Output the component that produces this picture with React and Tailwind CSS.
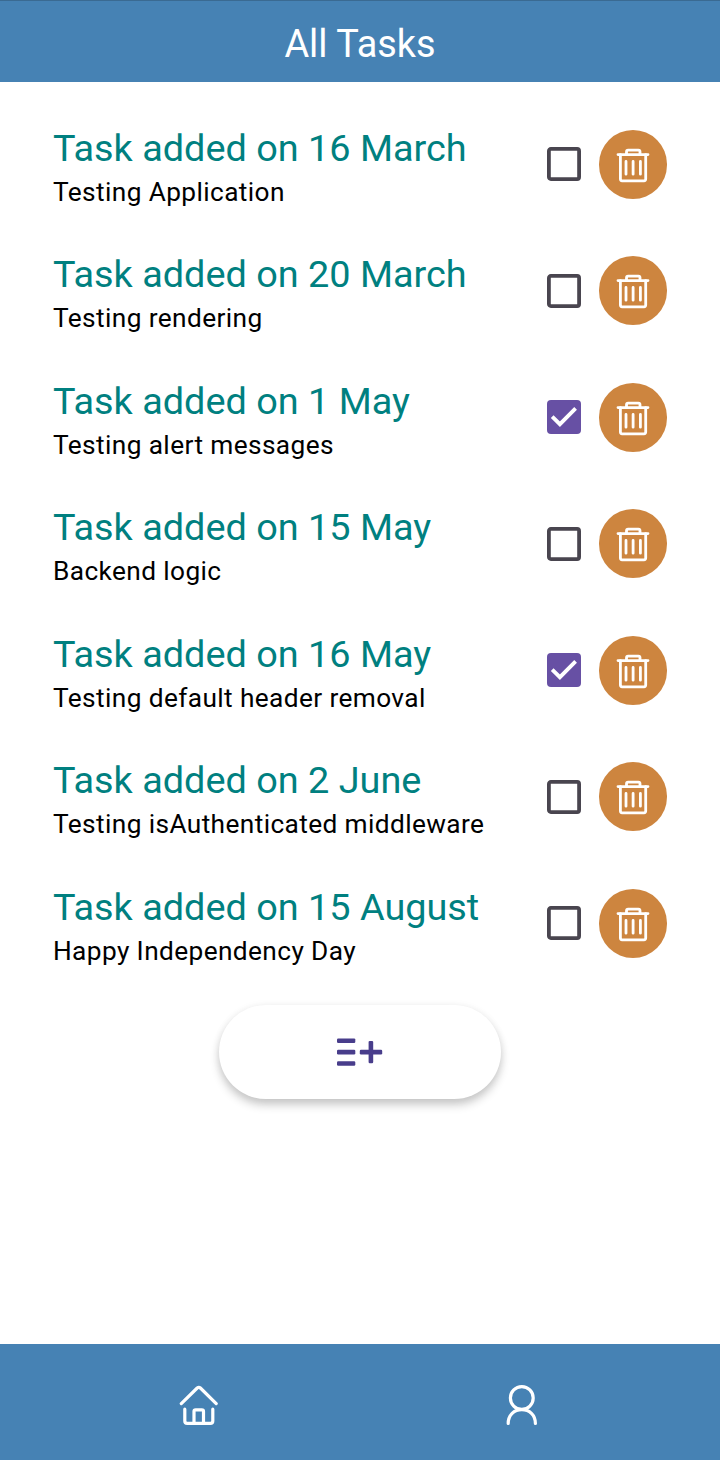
const tasks = [
  { title: "Task added on 16 March", note: "Testing Application", done: false },
  { title: "Task added on 20 March", note: "Testing rendering", done: false },
  { title: "Task added on 1 May", note: "Testing alert messages", done: true },
  { title: "Task added on 15 May", note: "Backend logic", done: false },
  { title: "Task added on 16 May", note: "Testing default header removal", done: true },
  { title: "Task added on 2 June", note: "Testing isAuthenticated middleware", done: false },
  { title: "Task added on 15 August", note: "Happy Independency Day", done: false },
];

function Checkbox({ checked }) {
  return (
    <button role="checkbox" aria-checked={checked} className="mr-[18px] shrink-0">
      <svg width="34" height="34" viewBox="0 0 34 34" fill="none" className="block">
        {checked ? (
          <>
            <rect width="34" height="34" rx="4" fill="#6750a4" />
            <path d="M5.2 16.6L12.9 24.2L28.6 8.4" stroke="white" strokeWidth="3.8" />
          </>
        ) : (
          <rect x="1.9" y="1.9" width="30.2" height="30.2" rx="2" stroke="#49454f" strokeWidth="3.8" />
        )}
      </svg>
    </button>
  );
}

function DeleteButton() {
  return (
    <button className="h-[69px] w-[68px] shrink-0 rounded-full bg-[#cd853f]">
      <svg width="68" height="69" viewBox="0 0 68 69" fill="none" stroke="white" strokeWidth="2.8" strokeLinecap="round" strokeLinejoin="round" className="block">
        <path d="M19 24.6H49M27.5 24.6V21.8Q27.5 20.2 29.1 20.2H39.4Q41 20.2 41 21.8V24.6" />
        <path d="M21.4 24.6V49.1Q21.4 50.8 23.1 50.8H45Q46.7 50.8 46.7 49.1V24.6" />
        <path d="M27 31.4V44.2M34.1 31.4V44.2M41.4 31.4V44.2" />
      </svg>
    </button>
  );
}

export default function App() {
  return (
    <div className="flex h-[1460px] w-[720px] flex-col bg-white font-['Roboto',sans-serif]">
      <header className="flex h-[82px] items-center justify-center border-t border-[#3a6a92] bg-[#4682b4] pt-[5px]">
        <h1 className="text-[37.9px] leading-[44px] text-white">All Tasks</h1>
      </header>
      <main className="flex flex-1 flex-col items-center pt-[19px]">
        <ul className="w-full">
          {tasks.map((task) => (
            <li key={task.title} className="flex h-[126.5px] items-center pl-[53px] pr-[53px]">
              <div className="min-w-0 flex-1 pt-[11px]">
                <h2 className="text-[37.85px] leading-[44px] whitespace-nowrap text-[#008080]">{task.title}</h2>
                <p className="text-[26.25px] leading-[44px] tracking-[0.39px] whitespace-nowrap text-black">{task.note}</p>
              </div>
              <Checkbox checked={task.done} />
              <DeleteButton />
            </li>
          ))}
        </ul>
        <button className="mt-[18.5px] flex h-[94px] w-[282px] items-center justify-center rounded-full bg-white shadow-[0_6px_10px_rgba(0,0,0,0.2),0_1px_8px_rgba(0,0,0,0.06)]">
          <svg width="46" height="28" viewBox="0 0 46 28" fill="#483d8b">
            <rect y="0.4" width="18.3" height="4.6" rx="1.2" />
            <rect y="11.8" width="18.3" height="4.6" rx="1.2" />
            <rect y="23.2" width="18.3" height="4.6" rx="1.2" />
            <rect x="22.8" y="11.8" width="22.4" height="4.6" rx="1.2" />
            <rect x="31.6" y="2.9" width="4.6" height="22.4" rx="1.2" />
          </svg>
        </button>
      </main>
      <nav className="flex h-[116px] justify-center gap-[283px] bg-[#4682b4] pt-[41px]">
        <svg width="40" height="42" viewBox="0 0 40 42" fill="none" stroke="white" strokeWidth="3.2" strokeLinecap="round" strokeLinejoin="round">
          <path d="M2.3 18.6L18.2 3Q19.8 1.6 21.4 3L37.2 18.6" />
          <path d="M5.8 24.2V36Q5.8 38.4 8.2 38.4H31.4Q33.8 38.4 33.8 36V24.2" />
          <path d="M15 38V26.5Q15 24.8 16.7 24.8H22.8Q24.5 24.8 24.5 26.5V38" />
        </svg>
        <svg width="40" height="42" viewBox="0 0 40 42" fill="none" stroke="white" strokeWidth="3.2" strokeLinecap="round">
          <circle cx="19.8" cy="13" r="11.4" />
          <path d="M6.2 38.5C6.2 30 12.2 24.6 19.8 24.6S33.4 30 33.4 38.5" />
        </svg>
      </nav>
    </div>
  );
}
